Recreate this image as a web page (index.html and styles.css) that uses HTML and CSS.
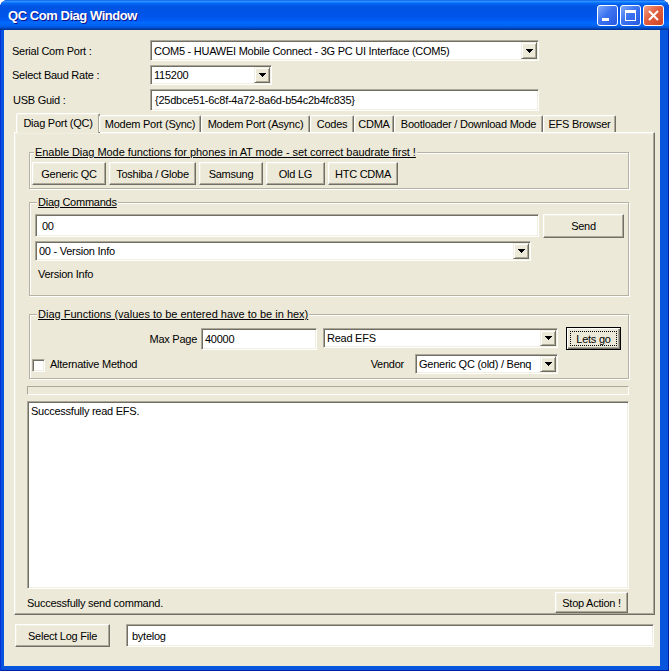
FILE: index.html
```html
<!DOCTYPE html>
<html>
<head>
<meta charset="utf-8">
<link rel="stylesheet" href="styles.css">
</head>
<body>
<div class="window">
  <div class="titlebar">
    <span class="title">QC Com Diag Window</span>
    <div class="ctrls">
      <span class="cbtn blue"><svg width="19" height="19" viewBox="0 0 19 19"><rect x="4" y="12" width="7" height="3" fill="#fff"/></svg></span>
      <span class="cbtn blue"><svg width="19" height="19" viewBox="0 0 19 19"><rect x="4.5" y="4.5" width="10" height="10" fill="none" stroke="#fff"/><rect x="4" y="4" width="11" height="3" fill="#fff"/></svg></span>
      <span class="cbtn red"><svg width="19" height="19" viewBox="0 0 19 19"><path d="M5 5L14 14M14 5L5 14" stroke="#fff" stroke-width="2" fill="none"/></svg></span>
    </div>
  </div>
  <div class="client">
    <div class="form">
      <div class="row r1">
        <span class="lbl">Serial Com Port :</span>
        <div class="combo cb-port"><span class="val">COM5 - HUAWEI Mobile Connect - 3G PC UI Interface (COM5)</span><span class="drop"><svg width="7" height="4" viewBox="0 0 7 4"><path d="M0 0h7v1h-1v1h-1v1h-1v1h-1v-1h-1v-1h-1v-1h-1z" fill="#000"/></svg></span></div>
      </div>
      <div class="row r2">
        <span class="lbl">Select Baud Rate :</span>
        <div class="combo cb-baud"><span class="val">115200</span><span class="drop"><svg width="7" height="4" viewBox="0 0 7 4"><path d="M0 0h7v1h-1v1h-1v1h-1v1h-1v-1h-1v-1h-1v-1h-1z" fill="#000"/></svg></span></div>
      </div>
      <div class="row r3">
        <span class="lbl lbl-guid">USB Guid :</span>
        <div class="edit ed-guid">{25dbce51-6c8f-4a72-8a6d-b54c2b4fc835}</div>
      </div>
    </div>

    <div class="tabs">
      <span class="tab sel t1">Diag Port (QC)</span>
      <span class="tab t2">Modem Port (Sync)</span>
      <span class="tab t3">Modem Port (Async)</span>
      <span class="tab t4">Codes</span>
      <span class="tab t5">CDMA</span>
      <span class="tab t6">Bootloader / Download Mode</span>
      <span class="tab t7">EFS Browser</span>
    </div>

    <div class="panel">
      <div class="group g1">
        <span class="legend">Enable Diag Mode functions for phones in AT mode - set correct baudrate first !</span>
        <div class="btnrow">
          <span class="btn b-gen">Generic QC</span>
          <span class="btn b-tosh">Toshiba / Globe</span>
          <span class="btn b-sam">Samsung</span>
          <span class="btn b-lg">Old LG</span>
          <span class="btn b-htc">HTC CDMA</span>
        </div>
      </div>

      <div class="group g2">
        <span class="legend">Diag Commands</span>
        <div class="cmdrow">
          <div class="edit ed-cmd">00</div>
          <span class="btn b-send">Send</span>
        </div>
        <div class="combo cb-cmd"><span class="val">00 - Version Info</span><span class="drop"><svg width="7" height="4" viewBox="0 0 7 4"><path d="M0 0h7v1h-1v1h-1v1h-1v1h-1v-1h-1v-1h-1v-1h-1z" fill="#000"/></svg></span></div>
        <div class="vinfo">Version Info</div>
      </div>

      <div class="group g3">
        <span class="legend">Diag Functions (values to be entered have to be in hex)</span>
        <div class="fnrow">
          <span class="mp-label">Max Page</span>
          <div class="edit ed-page">40000</div>
          <div class="combo cb-fn"><span class="val">Read EFS</span><span class="drop"><svg width="7" height="4" viewBox="0 0 7 4"><path d="M0 0h7v1h-1v1h-1v1h-1v1h-1v-1h-1v-1h-1v-1h-1z" fill="#000"/></svg></span></div>
          <span class="btn def b-go"><span class="focus">Lets go</span></span>
        </div>
        <div class="vendrow">
          <div class="chkwrap"><span class="chk"></span><span class="chklbl">Alternative Method</span></div>
          <span class="vend-lbl">Vendor</span>
          <div class="combo cb-vend"><span class="val">Generic QC (old) / Benq</span><span class="drop"><svg width="7" height="4" viewBox="0 0 7 4"><path d="M0 0h7v1h-1v1h-1v1h-1v1h-1v-1h-1v-1h-1v-1h-1z" fill="#000"/></svg></span></div>
        </div>
      </div>

      <div class="progress"></div>
      <div class="log">Successfully read EFS.</div>
      <div class="statusrow">
        <span class="status">Successfully send command.</span>
        <span class="btn b-stop">Stop Action !</span>
      </div>
    </div>

    <div class="bottomrow">
      <span class="btn b-log">Select Log File</span>
      <div class="edit ed-log">bytelog</div>
    </div>
  </div>
</div>
</body>
</html>
```
FILE: styles.css
```css
* { box-sizing: border-box; margin: 0; padding: 0; }
html, body { width: 669px; height: 671px; background: #fff; overflow: hidden; }
body { font-family: "Liberation Sans", Arial, sans-serif; font-size: 11px; letter-spacing: -0.25px; color: #000; }

.window {
  width: 669px; height: 671px;
  display: flex; flex-direction: column;
  background: #0855DD;
  border-radius: 8px 8px 0 0;
  overflow: hidden;
  box-shadow: inset 1px 0 0 #0831D9, inset -1px 0 0 #001EA0, inset 0 -1px 0 #001EA0;
}

.titlebar {
  height: 30px; flex: none;
  display: flex; align-items: center;
  padding-left: 8px;
  background: linear-gradient(to bottom, #0058EE 0%, #3593FF 4%, #288EFF 6%, #127DFF 8%, #036FFC 10%, #0262EE 14%, #0057E5 20%, #0054E3 24%, #0055EB 56%, #005BF5 66%, #026AFE 76%, #0062EF 86%, #0052D6 92%, #0040AB 96%, #003092 100%);
}
.title {
  flex: 1;
  color: #fff; font-weight: bold; font-size: 13px;
  letter-spacing: -0.45px;
  text-shadow: 1px 1px 0 #0F1089;
  margin-top: 1px;
}
.ctrls { display: flex; gap: 2px; margin-right: 5px; margin-top: 1px; }
.cbtn {
  width: 21px; height: 21px;
  border: 1px solid #fff; border-radius: 3px;
  display: flex; align-items: center; justify-content: center;
}
.cbtn.blue { background: linear-gradient(135deg, #7EA8FB 0%, #3C74F0 45%, #2659E0 100%); }
.cbtn.red { background: linear-gradient(135deg, #F3A186 0%, #E2603F 45%, #CC4424 100%); }

.client {
  flex: 1;
  margin: 0 9px 5px 4px;
  background: #ECE9D8;
  display: flex; flex-direction: column;
}

/* ---------- common controls ---------- */
.edit {
  background: #fff;
  border: 1px solid; border-color: #ACA899 #fff #fff #ACA899;
  box-shadow: inset 1px 1px 0 #716F64, inset -1px -1px 0 #F1EFE2;
  display: flex; align-items: center;
  padding: 0 4px;
  white-space: nowrap; overflow: hidden;
}
.combo {
  background: #fff;
  border: 1px solid; border-color: #ACA899 #fff #fff #ACA899;
  box-shadow: inset 1px 1px 0 #716F64, inset -1px -1px 0 #F1EFE2;
  display: flex; align-items: stretch;
  padding: 1px;
}
.combo .val {
  flex: 1; padding-left: 2px;
  display: flex; align-items: center;
  white-space: nowrap; overflow: hidden;
}
.combo .drop {
  width: 16px; flex: none;
  background: #ECE9D8;
  border: 1px solid; border-color: #F1EFE2 #716F64 #716F64 #F1EFE2;
  box-shadow: inset 1px 1px 0 #fff, inset -1px -1px 0 #ACA899;
  display: flex; align-items: center; justify-content: center;
}
.combo .drop svg { display: block; }
.btn {
  background: #ECE9D8;
  border: 1px solid; border-color: #fff #716F64 #716F64 #fff;
  box-shadow: inset -1px -1px 0 #ACA899, inset 1px 1px 0 #F1EFE2;
  display: flex; align-items: center; justify-content: center;
  white-space: nowrap; flex: none;
}
.btn.def {
  border: 1px solid #000;
  box-shadow: inset 1px 1px 0 #fff, inset -1px -1px 0 #716F64, inset -2px -2px 0 #ACA899;
  padding: 3px;
  align-items: stretch;
}
.btn .focus {
  flex: 1;
  border: 1px dotted #000;
  display: flex; align-items: center; justify-content: center;
}

/* ---------- top form ---------- */
.form { padding: 10px 0 0 8px; flex: none; }
.row { display: flex; align-items: center; }
.lbl { width: 138px; }
.lbl-guid { padding-left: 1px; }
.r1 { height: 21px; margin-bottom: 4px; }
.r2 { height: 20px; margin-bottom: 4px; }
.r3 { height: 22px; }
.cb-port { width: 389px; height: 21px; }
.cb-baud { width: 122px; height: 20px; }
.ed-guid { width: 389px; height: 22px; padding-left: 4px; }

/* ---------- tabs ---------- */
.tabs {
  display: flex; align-items: flex-end;
  height: 19px; margin-top: 2px;
  padding-left: 12px;
  position: relative; z-index: 1;
  flex: none;
}
.tab {
  height: 17px;
  background: #ECE9D8;
  border: 1px solid; border-bottom: none;
  border-color: #fff #716F64 transparent #fff;
  box-shadow: inset -1px 0 0 #ACA899, inset 1px 1px 0 #F1EFE2;
  border-radius: 2px 2px 0 0;
  display: flex; align-items: center; justify-content: center;
  white-space: nowrap;
}
.tab.sel { height: 20px; margin-bottom: -1px; margin-right: -1px; padding-bottom: 2px; }
.t1 { width: 84px; }
.t2 { width: 102px; }
.t3 { width: 109px; }
.t4 { width: 44px; }
.t5 { width: 40px; }
.t6 { width: 149px; }
.t7 { width: 73px; }

/* ---------- panel ---------- */
.panel {
  width: 641px; height: 483px; flex: none;
  margin-left: 10px;
  border: 1px solid; border-color: #fff #716F64 #716F64 #fff;
  box-shadow: inset -1px -1px 0 #ACA899, inset 1px 1px 0 #F1EFE2;
  display: flex; flex-direction: column;
  padding-left: 14px;
}
.group {
  position: relative;
  width: 600px; flex: none;
  border: 1px solid #B5B2A3;
  box-shadow: inset 1px 1px 0 #fff, 1px 1px 0 #fff;
}
.legend {
  position: absolute; top: -8px; left: 4px;
  padding: 0 1px;
  line-height: 14px;
  background: #ECE9D8;
  text-decoration: underline;
  white-space: nowrap;
}
.g1 .legend { letter-spacing: -0.05px; }
.g2 .legend { left: 7px; }
.g3 .legend { left: 7px; letter-spacing: 0; }
.g1 { height: 37px; margin-top: 19px; padding: 9px 0 0 2px; }
.btnrow { display: flex; gap: 3px; }
.btnrow .btn { height: 23px; }
.b-gen { width: 74px; }
.b-tosh { width: 87px; }
.b-sam { width: 64px; }
.b-lg { width: 59px; }
.b-htc { width: 70px; }

.g2 { height: 94px; margin-top: 13px; padding: 11px 0 0 5px; }
.cmdrow { display: flex; align-items: flex-start; }
.ed-cmd { width: 504px; height: 23px; padding-left: 6px; }
.b-send { width: 81px; height: 24px; margin-left: 4px; }
.cb-cmd { width: 496px; height: 20px; margin-top: 3px; }
.vinfo { margin-top: 6px; padding-left: 3px; line-height: 14px; }

.g3 { height: 65px; margin-top: 18px; padding-top: 12px; }
.fnrow { display: flex; align-items: flex-start; }
.mp-label { width: 167px; text-align: right; line-height: 22px; margin-top: 1px; }
.ed-page { width: 116px; height: 22px; margin-left: 4px; margin-top: 1px; padding-left: 3px; }
.cb-fn { width: 235px; height: 20px; margin-left: 6px; margin-top: 1px; }
.b-go { width: 55px; height: 23px; margin-left: 8px; }
.vendrow { display: flex; align-items: center; height: 20px; margin-top: 4px; }
.chkwrap { width: 329px; display: flex; align-items: center; }
.chk {
  width: 13px; height: 13px; margin-left: 2px; margin-top: 2px;
  background: #fff;
  border: 1px solid; border-color: #ACA899 #fff #fff #ACA899;
  box-shadow: inset 1px 1px 0 #716F64, inset -1px -1px 0 #F1EFE2;
}
.chklbl { margin-left: 5px; }
.vend-lbl { width: 45px; text-align: right; }
.cb-vend { width: 143px; height: 20px; margin-left: 11px; }

.progress {
  width: 602px; height: 9px; flex: none;
  margin: 7px 0 0 -2px;
  border: 1px solid; border-color: #ACA899 #fff #fff #ACA899;
}
.log {
  width: 602px; height: 188px; flex: none;
  margin: 6px 0 0 -2px;
  background: #fff;
  border: 1px solid; border-color: #ACA899 #fff #fff #ACA899;
  box-shadow: inset 1px 1px 0 #716F64, inset -1px -1px 0 #F1EFE2;
  padding: 2px 3px;
  line-height: 14px;
}
.statusrow {
  width: 601px; height: 21px; flex: none;
  margin: 3px 0 0 -2px;
  display: flex; align-items: center; justify-content: space-between;
}
.b-stop { width: 73px; height: 21px; }

.bottomrow { display: flex; align-items: flex-start; margin-top: 9px; padding-left: 11px; flex: none; }
.b-log { width: 95px; height: 23px; }
.ed-log { width: 528px; height: 23px; margin-left: 16px; padding-left: 5px; }
```
